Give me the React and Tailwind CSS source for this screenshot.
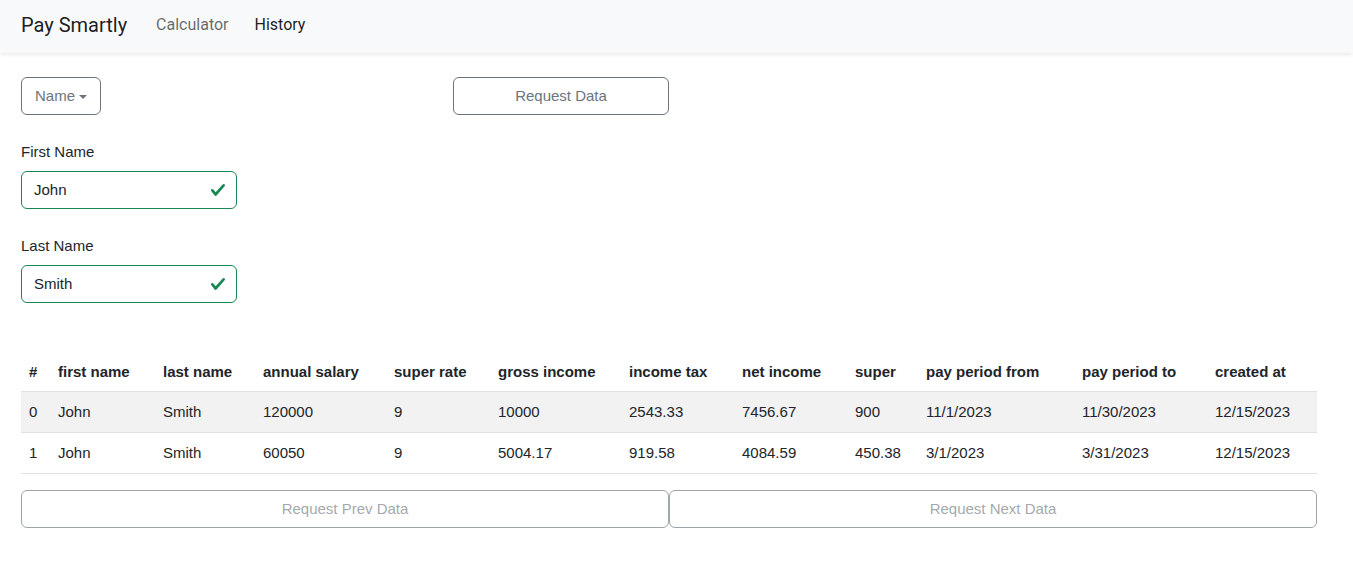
import React from "react";

const rows = [
  ["0", "John", "Smith", "120000", "9", "10000", "2543.33", "7456.67", "900", "11/1/2023", "11/30/2023", "12/15/2023"],
  ["1", "John", "Smith", "60050", "9", "5004.17", "919.58", "4084.59", "450.38", "3/1/2023", "3/31/2023", "12/15/2023"],
];

const headers = ["#", "first name", "last name", "annual salary", "super rate", "gross income", "income tax", "net income", "super", "pay period from", "pay period to", "created at"];
const widths = ["w-[29px]", "w-[105px]", "w-[100px]", "w-[131px]", "w-[104px]", "w-[131px]", "w-[113px]", "w-[113px]", "w-[71px]", "w-[156px]", "w-[133px]", "w-[110px]"];

function Check() {
  return (
    <svg width="16" height="16" viewBox="0 0 8 8" className="shrink-0">
      <path fill="#198754" d="M2.3 6.73.6 4.53c-.4-1.04.46-1.4 1.1-.8l1.1 1.4 3.4-3.8c.6-.63 1.6-.27 1.2.7l-4 4.6c-.43.5-.8.4-1.1.1z" />
    </svg>
  );
}

function ValidInput({ label, value }) {
  return (
    <div className="flex flex-col">
      <label className="text-[15px] text-[#212529] mb-[7px] leading-[24px]">{label}</label>
      <div className="w-[216px] h-[38px] border border-[#198754] rounded-[6px] flex items-center justify-between pl-[12px] pr-[10px]">
        <span className="text-[15px] text-[#212529]">{value}</span>
        <Check />
      </div>
    </div>
  );
}

export default function App() {
  return (
    <div className="min-h-screen bg-white" style={{ fontFamily: '"Liberation Sans", Arial, sans-serif' }}>
      <nav className="h-[53px] bg-[#f8f9fa] shadow-[0_2px_4px_rgba(0,0,0,0.08)] flex items-center px-[21px] pb-[4px]" style={{ fontFamily: "Roboto, sans-serif" }}>
        <span className="text-[20px] text-[rgba(0,0,0,0.9)] mr-[29px]">Pay Smartly</span>
        <span className="text-[16px] text-[rgba(0,0,0,0.6)] mr-[26px]">Calculator</span>
        <span className="text-[16px] text-[rgba(0,0,0,0.9)]">History</span>
      </nav>

      <div className="px-[21px] pt-[24px]">
        <div className="flex items-center">
          <button className="h-[38px] w-[80px] pt-[1px] border border-[#6c757d] rounded-[6px] text-[15px] text-[#6c757d] flex items-center justify-center gap-[4px]">
            Name
            <span className="w-0 h-0 border-l-[4px] border-r-[4px] border-t-[4px] border-l-transparent border-r-transparent border-t-[#6c757d]" />
          </button>
          <button className="ml-[352px] h-[38px] w-[216px] pt-[1px] border border-[#6c757d] rounded-[6px] text-[15px] text-[#6c757d]">
            Request Data
          </button>
        </div>

        <div className="mt-[25px] flex flex-col gap-[25px]">
          <ValidInput label="First Name" value="John" />
          <ValidInput label="Last Name" value="Smith" />
        </div>

        <table className="mt-[49px] w-[1296px] table-fixed border-collapse text-[15px] text-[#212529]">
          <thead>
            <tr className="border-b border-[#dee2e6]">
              {headers.map((h, i) => (
                <th key={h} className={`${widths[i]} text-left font-bold px-[8px] pt-[8px] pb-[7px] leading-[24px] whitespace-nowrap`}>{h}</th>
              ))}
            </tr>
          </thead>
          <tbody>
            {rows.map((r, ri) => (
              <tr key={ri} className={`border-b border-[#dee2e6] ${ri === 0 ? "bg-[#f2f2f2]" : ""}`}>
                {r.map((c, ci) => (
                  <td key={ci} className="px-[8px] py-[8px] leading-[24px] whitespace-nowrap">{c}</td>
                ))}
              </tr>
            ))}
          </tbody>
        </table>

        <div className="mt-[16px] flex w-[1296px]">
          <button disabled className="flex-1 h-[38px] border border-[#6c757d]/65 rounded-[6px] text-[15px] text-[#6c757d]/65">
            Request Prev Data
          </button>
          <button disabled className="flex-1 h-[38px] border border-[#6c757d]/65 rounded-[6px] text-[15px] text-[#6c757d]/65">
            Request Next Data
          </button>
        </div>
      </div>
    </div>
  );
}
